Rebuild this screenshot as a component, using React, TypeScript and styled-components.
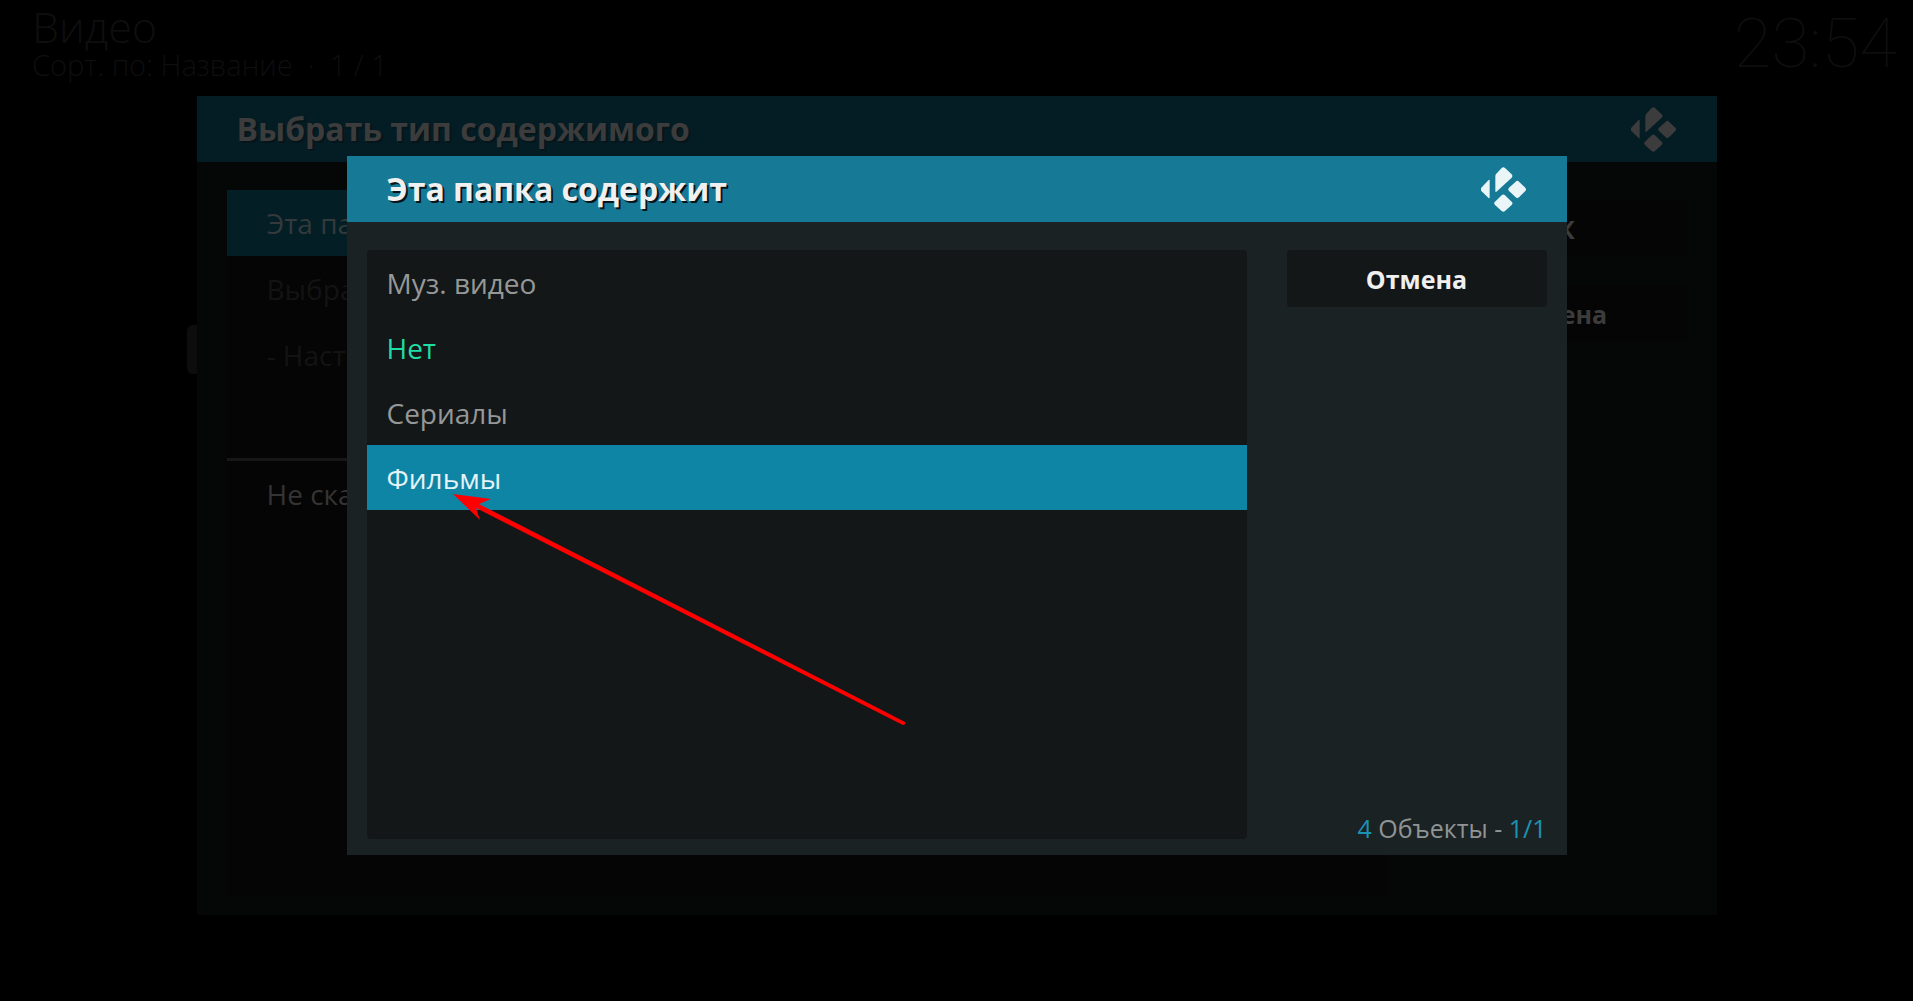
import React from "react";
import styled, { createGlobalStyle } from "styled-components";

const GlobalStyle = createGlobalStyle`
  * { box-sizing: border-box; }
  html, body, #root { height: 100%; }
  body {
    margin: 0;
    background: #000001;
    font-family: "Open Sans", "Noto Sans", sans-serif;
    font-weight: 400;
    overflow: hidden;
  }
  button { font: inherit; border: 0; margin: 0; cursor: pointer; }
`;

const Screen = styled.div`
  position: relative;
  min-height: 100%;
`;

const TopBar = styled.header`
  display: flex;
  justify-content: space-between;
  align-items: flex-start;
  padding: 0 16px 0 32px;
  font-weight: 300;
  color: #0e0e0e;
`;

const Section = styled.h1`
  margin: 0;
  font-size: 43px;
  line-height: 54px;
  font-weight: 300;
`;

const SortLine = styled.p`
  margin: 0;
  font-size: 29px;
  line-height: 22px;
  white-space: pre;
`;

const Clock = styled.time`
  font-family: Roboto, sans-serif;
  font-weight: 100;
  font-size: 69px;
  line-height: 88px;
`;

const MenuHandle = styled.div`
  position: absolute;
  left: calc(50% - 770px);
  top: 325px;
  width: 30px;
  height: 49px;
  border-radius: 6px;
  background: #0d0d0d;
`;

const Overlay = styled.div`
  position: fixed;
  inset: 0;
  display: flex;
  align-items: center;
  justify-content: center;
  padding-top: 10px;
`;

const Dialog = styled.section<{ $width: number; $dim?: boolean }>`
  display: flex;
  flex-direction: column;
  width: min(${(p) => p.$width}px, calc(100% - 40px));
  background: ${(p) => (p.$dim ? "#050706" : "#1b2224")};
`;

const DialogHeader = styled.header<{ $dim?: boolean }>`
  display: flex;
  align-items: center;
  justify-content: space-between;
  height: 66px;
  padding: 0 40px;
  background: ${(p) => (p.$dim ? "#041c23" : "#167a97")};
  color: ${(p) => (p.$dim ? "#3c3c3c" : "#f0f0f0")};
`;

const DialogTitle = styled.h2`
  margin: 0;
  font-size: 32px;
  line-height: 40px;
  font-weight: 700;
  text-shadow: 2px 2px 0 #06151a;
`;

const Logo = styled.svg<{ $dim?: boolean }>`
  width: 46px;
  height: 46px;
  fill: ${(p) => (p.$dim ? "#3c3c3c" : "#eaf5f8")};
`;

const DialogBody = styled.div<{ $dim?: boolean }>`
  display: flex;
  gap: 40px;
  padding: ${(p) => (p.$dim ? "28px 30px 18px" : "28px 20px 16px")};
`;

const ListPanel = styled.div<{ $dim?: boolean }>`
  flex: 1;
  min-height: ${(p) => (p.$dim ? 707 : 589)}px;
  border-radius: 4px;
  background: ${(p) => (p.$dim ? "#050505" : "#131718")};
`;

const List = styled.ul`
  list-style: none;
  margin: 0;
  padding: 0;
`;

type Tone = "normal" | "current" | "focused" | "dimFocused" | "dimDisabled";

const tones: Record<Tone, string> = {
  normal: "background: transparent; color: #969898;",
  current: "background: transparent; color: #1fdca2;",
  focused: "background: #0f85a6; color: #e4f3f7;",
  dimFocused: "background: #031e25; color: #34393b;",
  dimDisabled: "background: transparent; color: #131313;",
};

const Row = styled.button<{ $tone: Tone; $inset: number; $height: number }>`
  display: block;
  width: 100%;
  height: ${(p) => p.$height}px;
  padding: 0 ${(p) => p.$inset}px;
  font-size: 28px;
  line-height: 36px;
  text-align: left;
  ${(p) => tones[p.$tone]}
`;

const Description = styled.p`
  margin: 70px 0 0;
  padding: 15px 40px;
  border-top: 3px solid #171717;
  font-size: 28px;
  line-height: 36px;
  color: #343434;
`;

const Side = styled.div<{ $dim?: boolean }>`
  display: flex;
  flex-direction: column;
  width: 260px;
  gap: 28px;
  padding-top: ${(p) => (p.$dim ? 10 : 0)}px;
`;

const ActionButton = styled.button<{ $dim?: boolean }>`
  height: 57px;
  padding: 0 16px;
  border-radius: 4px;
  background: ${(p) => (p.$dim ? "#050505" : "#131718")};
  color: ${(p) => (p.$dim ? "#3c3c3c" : "#f0f0f0")};
  font-size: 25px;
  font-weight: 700;
  line-height: 32px;
`;

const Counter = styled.p`
  margin: auto 0 0;
  font-size: 25px;
  line-height: 22px;
  text-align: right;
  color: #909495;
  white-space: nowrap;
`;

const Accent = styled.span`
  color: #1c92b3;
`;

const Pointer = styled.svg`
  position: absolute;
  left: calc(50% - 505px);
  top: calc(50% - 8px);
  width: 454px;
  height: 234px;
  overflow: visible;
  pointer-events: none;
`;

const KodiLogo = ({ dim }: { dim?: boolean }) => (
  <Logo $dim={dim} viewBox="2 -2 138 138" aria-hidden="true">
    <path d="M28 41V92Q28 97 24 93L3 73Q-2 68 3 63L24 41Q28 37 28 41Z" />
    <path d="M45 28Q45 24 48 21L64 4Q69 -1 74 4L94 23Q99 28 94 33L50 74Q45 78 45 73Z" />
    <path d="M106 45Q111 40 116 45L135 63Q140 68 135 73L116 92Q111 97 106 92L86 73Q81 68 86 63Z" />
    <path d="M64 86Q69 81 74 86L94 105Q99 110 94 115L74 133Q69 138 64 133L44 115Q39 110 44 105Z" />
  </Logo>
);

const choices: { label: string; tone: Tone }[] = [
  { label: "Муз. видео", tone: "normal" },
  { label: "Нет", tone: "current" },
  { label: "Сериалы", tone: "normal" },
  { label: "Фильмы", tone: "focused" },
];

const settings: { label: string; tone: Tone }[] = [
  { label: "Эта па", tone: "dimFocused" },
  { label: "Выбра", tone: "dimDisabled" },
  { label: "- Наст", tone: "dimDisabled" },
];

export default function App() {
  return (
    <Screen>
      <GlobalStyle />
      <TopBar>
        <div>
          <Section>Видео</Section>
          <SortLine>{"Сорт. по: Название  ·  1 / 1"}</SortLine>
        </div>
        <Clock>23:54</Clock>
      </TopBar>
      <MenuHandle />

      <Overlay>
        <Dialog $width={1520} $dim aria-labelledby="content-title">
          <DialogHeader $dim>
            <DialogTitle id="content-title">Выбрать тип содержимого</DialogTitle>
            <KodiLogo dim />
          </DialogHeader>
          <DialogBody $dim>
            <ListPanel $dim>
              <List>
                {settings.map((s) => (
                  <li key={s.label}>
                    <Row type="button" $tone={s.tone} $inset={40} $height={66}>
                      {s.label}
                    </Row>
                  </li>
                ))}
              </List>
              <Description>Не ска</Description>
            </ListPanel>
            <Side $dim>
              <ActionButton type="button" $dim>ОК</ActionButton>
              <ActionButton type="button" $dim>Отмена</ActionButton>
            </Side>
          </DialogBody>
        </Dialog>
      </Overlay>

      <Overlay>
        <Dialog $width={1220} role="dialog" aria-labelledby="folder-title">
          <DialogHeader>
            <DialogTitle id="folder-title">Эта папка содержит</DialogTitle>
            <KodiLogo />
          </DialogHeader>
          <DialogBody>
            <ListPanel>
              <List>
                {choices.map((c) => (
                  <li key={c.label}>
                    <Row type="button" $tone={c.tone} $inset={20} $height={65}>
                      {c.label}
                    </Row>
                  </li>
                ))}
              </List>
            </ListPanel>
            <Side>
              <ActionButton type="button">Отмена</ActionButton>
              <Counter>
                <Accent>4</Accent> Объекты - <Accent>1/1</Accent>
              </Counter>
            </Side>
          </DialogBody>
        </Dialog>
        <Pointer viewBox="0 0 454 234" aria-hidden="true">
          <path
            fill="#fe0000"
            d="M1 1L39 6L27 11L453 229Q454 232 451 232L24 15L28 27Z"
          />
        </Pointer>
      </Overlay>
    </Screen>
  );
}
